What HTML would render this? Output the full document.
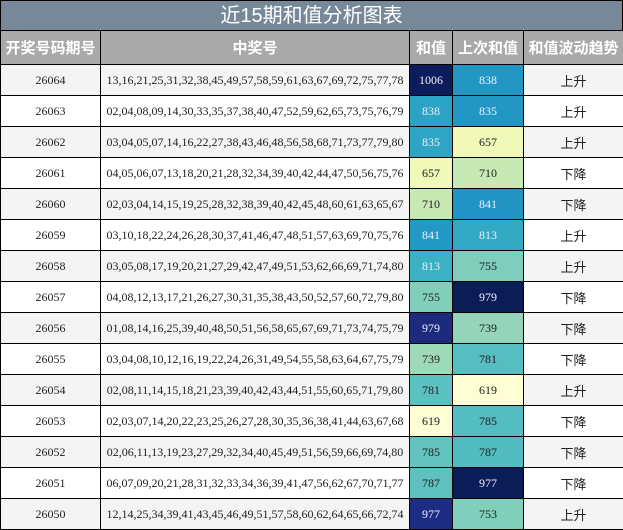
<!DOCTYPE html>
<html><head><meta charset="utf-8"><style>
*{margin:0;padding:0;box-sizing:border-box}
body{width:623px;height:530px;background:#fff;font-family:"Liberation Serif","Noto Serif CJK SC",serif;overflow:hidden}
.title{height:30px;background:#778899;color:#fff;font-family:"Liberation Sans","Noto Sans CJK SC",sans-serif;font-size:20px;text-align:center;line-height:30px;border:1px solid #000;border-bottom:none}
table{border-collapse:collapse;width:623px;table-layout:fixed}
td,th{border:1px solid #000;text-align:center;font-size:12px;color:#222}
th{background:#a9a9a9;color:#fff;font-family:"Liberation Sans","Noto Sans CJK SC",sans-serif;font-size:15px;font-weight:bold;height:34px}
td{height:31px}
tr:nth-child(even) td{background:#f4f4f4}
td.t{font-family:"Liberation Sans","Noto Sans CJK SC",sans-serif;font-size:13px}
td.w{color:#eef}
</style></head><body>
<div class="title">近15期和值分析图表</div>
<table>
<colgroup><col style="width:100px"><col style="width:309px"><col style="width:43px"><col style="width:71px"><col style="width:100px"></colgroup>
<tr><th>开奖号码期号</th><th>中奖号</th><th>和值</th><th>上次和值</th><th>和值波动趋势</th></tr>
<tr><td>26064</td><td>13,16,21,25,31,32,38,45,49,57,58,59,61,63,67,69,72,75,77,78</td><td class="w" style="background:#0b1d5b!important">1006</td><td class="w" style="background:#2397c4!important">838</td><td class="t">上升</td></tr>
<tr><td>26063</td><td>02,04,08,09,14,30,33,35,37,38,40,47,52,59,62,65,73,75,76,79</td><td class="w" style="background:#2ba3c4!important">838</td><td class="w" style="background:#2397c4!important">835</td><td class="t">上升</td></tr>
<tr><td>26062</td><td>03,04,05,07,14,16,22,27,38,43,46,48,56,58,68,71,73,77,79,80</td><td class="w" style="background:#2ea5c4!important">835</td><td style="background:#f0f9b8!important">657</td><td class="t">上升</td></tr>
<tr><td>26061</td><td>04,05,06,07,13,18,20,21,28,32,34,39,40,42,44,47,50,56,75,76</td><td style="background:#f0f9b8!important">657</td><td style="background:#c8e9b4!important">710</td><td class="t">下降</td></tr>
<tr><td>26060</td><td>02,03,04,14,15,19,25,28,32,38,39,40,42,45,48,60,61,63,65,67</td><td style="background:#c8e9b4!important">710</td><td class="w" style="background:#2194c3!important">841</td><td class="t">下降</td></tr>
<tr><td>26059</td><td>03,10,18,22,24,26,28,30,37,41,46,47,48,51,57,63,69,70,75,76</td><td class="w" style="background:#229ac5!important">841</td><td class="w" style="background:#33a9c4!important">813</td><td class="t">上升</td></tr>
<tr><td>26058</td><td>03,05,08,17,19,20,21,27,29,42,47,49,51,53,62,66,69,71,74,80</td><td class="w" style="background:#3cb1c3!important">813</td><td style="background:#7fcdbb!important">755</td><td class="t">上升</td></tr>
<tr><td>26057</td><td>04,08,12,13,17,21,26,27,30,31,35,38,43,50,52,57,60,72,79,80</td><td style="background:#80cfbb!important">755</td><td class="w" style="background:#0b1d56!important">979</td><td class="t">下降</td></tr>
<tr><td>26056</td><td>01,08,14,16,25,39,40,48,50,51,56,58,65,67,69,71,73,74,75,79</td><td class="w" style="background:#1c2b7e!important">979</td><td style="background:#94d5b9!important">739</td><td class="t">下降</td></tr>
<tr><td>26055</td><td>03,04,08,10,12,16,19,22,24,26,31,49,54,55,58,63,64,67,75,79</td><td style="background:#9ed9b8!important">739</td><td style="background:#56bec1!important">781</td><td class="t">下降</td></tr>
<tr><td>26054</td><td>02,08,11,14,15,18,21,23,39,40,42,43,44,51,55,60,65,71,79,80</td><td style="background:#5bc0c0!important">781</td><td style="background:#fdfed4!important">619</td><td class="t">上升</td></tr>
<tr><td>26053</td><td>02,03,07,14,20,22,23,25,26,27,28,30,35,36,38,41,44,63,67,68</td><td style="background:#fdfed4!important">619</td><td style="background:#53bdc1!important">785</td><td class="t">下降</td></tr>
<tr><td>26052</td><td>02,06,11,13,19,23,27,29,32,34,40,45,49,51,56,59,66,69,74,80</td><td style="background:#63c3bf!important">785</td><td style="background:#52bcc1!important">787</td><td class="t">下降</td></tr>
<tr><td>26051</td><td>06,07,09,20,21,28,31,32,33,34,36,39,41,47,56,62,67,70,71,77</td><td style="background:#5ec1c0!important">787</td><td class="w" style="background:#0b1d59!important">977</td><td class="t">下降</td></tr>
<tr><td>26050</td><td>12,14,25,34,39,41,43,45,46,49,51,57,58,60,62,64,65,66,72,74</td><td class="w" style="background:#1d2d83!important">977</td><td style="background:#80cfbb!important">753</td><td class="t">上升</td></tr>
</table>
</body></html>
